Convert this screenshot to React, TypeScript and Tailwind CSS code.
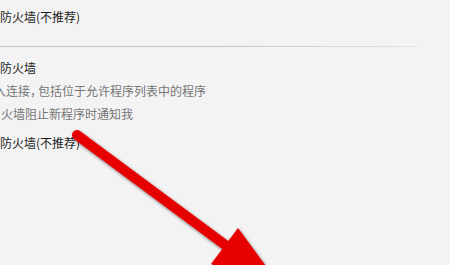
const font = { fontFamily: '"Noto Sans CJK SC", "Noto Sans", sans-serif' };

function Arrow() {
  return (
    <svg className="pointer-events-none absolute left-0 top-0" width="450" height="265" viewBox="0 0 450 265">
      <defs>
        <filter id="shadow" x="-20%" y="-20%" width="140%" height="140%">
          <feDropShadow dx="1" dy="1.5" stdDeviation="1.6" floodColor="#000" floodOpacity="0.55" />
        </filter>
      </defs>
      <g filter="url(#shadow)">
        <line x1="77" y1="135" x2="228" y2="247" stroke="#e60000" strokeWidth="10" strokeLinecap="round" />
        <polygon points="238,228 285,292 211,264" fill="#e60000" />
      </g>
    </svg>
  );
}

export default function App() {
  return (
    <div className="relative h-[265px] w-[450px] overflow-hidden bg-[#f3f3f3] text-[12px]" style={font}>
      <div className="flex flex-col pt-[6px]">
        <div className="h-[22px] leading-[22px] text-[#1e1e1e]">防火墙(不推荐)</div>
        <div className="mt-[18px] h-px w-[417px] bg-gradient-to-r from-[#c4c4c4] via-[#c4c4c4] to-[#e4e4e4]" />
        <div className="mt-[10px] h-[22px] leading-[22px] text-[#1e1e1e]">防火墙</div>
        <div className="ml-[-6px] h-[23px] whitespace-nowrap leading-[23px] text-[#757575]">
          入连接<span className="tracking-[-4px]">，</span>包括位于允许程序列表中的程序
        </div>
        <div className="ml-[1px] h-[23px] leading-[23px] text-[#757575]">火墙阻止新程序时通知我</div>
        <div className="mt-[7px] h-[22px] leading-[22px] text-[#1e1e1e]">防火墙(不推荐)</div>
      </div>
      <Arrow />
    </div>
  );
}
